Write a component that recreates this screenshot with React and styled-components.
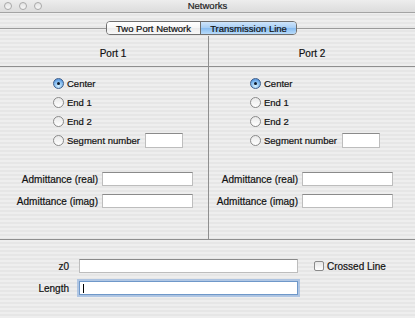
import React from 'react';
import styled, { createGlobalStyle } from 'styled-components';

const Global = createGlobalStyle`
    html, body {
        margin: 0;
        padding: 0;
    }
    body {
        font-family: "Liberation Sans", Arial, sans-serif;
        font-size: 10px;
        color: #111;
        -webkit-text-stroke: 0.2px #111;
    }
`

const stripes = 'repeating-linear-gradient(to bottom, #eeeeee 0px, #eeeeee 2px, #e6e6e6 2px, #e6e6e6 4px)';

const Window = styled.div`
    width: 415px;
    height: 318px;
    background: ${stripes};
    display: flex;
    flex-direction: column;
    overflow: hidden;
`

const TitleBar = styled.div`
    height: 12px;
    display: grid;
    grid-template-columns: 1fr auto 1fr;
    align-items: center;
    background: linear-gradient(#ededed, #dcdcdc);
    border-bottom: 1px solid #a3a3a3;
`

const Lights = styled.div`
    display: flex;
    gap: 7px;
    padding-left: 4px;
`

const Light = styled.span`
    width: 8px;
    height: 8px;
    border-radius: 50%;
    box-sizing: border-box;
    border: 1px solid #a9a9a9;
    background: linear-gradient(#e4e4e4, #f7f7f7);
`

const Title = styled.div`
    font-size: 9.5px;
    color: #2a2a2a;
    line-height: 12px;
`

const TabStrip = styled.div`
    display: flex;
    align-items: center;
    padding-top: 8px;
    padding-bottom: 1px;
    height: 14px;
`

const Rule = styled.div`
    flex: ${p => p.$w ? 'none' : '1'};
    width: ${p => p.$w}px;
    height: 1px;
    background: #9a9a9a;
`

const Segmented = styled.div`
    display: flex;
    height: 14px;
    border: 1px solid #6f6f6f;
    border-radius: 4px;
    overflow: hidden;
    box-sizing: border-box;
`

const Segment = styled.div`
    width: ${p => p.$w}px;
    display: flex;
    align-items: center;
    justify-content: center;
    font-size: 9.5px;
    color: #111;
    background: ${p => p.$on
        ? 'linear-gradient(#cfe5fb 0%, #a6cdf4 50%, #86bbf0 51%, #b9dcfb 100%)'
        : 'linear-gradient(#ffffff 0%, #f6f6f6 50%, #ececec 51%, #f8f8f8 100%)'};
    border-left: ${p => p.$on ? '1px solid #6f6f6f' : 'none'};
`

const Panels = styled.div`
    display: flex;
    height: 203px;
    border-bottom: 1px solid #8f8f8f;
`

const Column = styled.div`
    width: ${p => p.$w}px;
    flex: ${p => p.$w ? 'none' : '1'};
    border-right: ${p => p.$divider ? '1px solid #8f8f8f' : 'none'};
    display: flex;
    flex-direction: column;
`

const ColumnHead = styled.div`
    height: 18px;
    padding-top: 12px;
    padding-left: ${p => p.$shift}px;
    text-align: center;
    line-height: 12px;
    border-bottom: 1px solid #8f8f8f;
`

const RadioGroup = styled.div`
    display: flex;
    flex-direction: column;
    padding-top: 7px;
    padding-left: ${p => p.$shift}px;
    font-size: 9.5px;
`

const RadioRow = styled.div`
    height: 19px;
    display: flex;
    align-items: center;
    gap: 3px;
`

const RadioDot = styled.span`
    width: 11px;
    height: 11px;
    border-radius: 50%;
    box-sizing: border-box;
    border: 1px solid ${p => p.$on ? '#3f5f8c' : '#8a8a8a'};
    background: ${p => p.$on
        ? 'radial-gradient(circle at 50% 75%, #d8f2ff 0%, #7fb8ee 55%, #3f7fd0 100%)'
        : 'linear-gradient(#e9e9e9, #ffffff)'};
    display: flex;
    align-items: center;
    justify-content: center;

    &::after {
        content: '';
        width: 3px;
        height: 3px;
        border-radius: 50%;
        background: ${p => p.$on ? '#0d1a2c' : 'transparent'};
    }
`

const SmallBox = styled.div`
    width: 38px;
    height: 15px;
    margin-left: 2px;
    box-sizing: border-box;
    background: #fff;
    border: 1px solid #bdbdbd;
    border-top-color: #8a8a8a;
`

const FieldGrid = styled.div`
    display: grid;
    grid-template-columns: 89px 91px;
    column-gap: 4px;
    row-gap: 8px;
    align-items: center;
    margin-top: 22px;
    padding-left: ${p => p.$shift}px;
`

const Label = styled.div`
    text-align: right;
    white-space: nowrap;
`

const Field = styled.div`
    height: 14px;
    box-sizing: border-box;
    background: #fff;
    border: 1px solid #bdbdbd;
    border-top-color: #8a8a8a;
    display: flex;
    align-items: center;
    ${p => p.$focus && `
        border-color: #6f98c9;
        box-shadow: 0 0 0 2px rgba(128, 168, 220, 0.55);
    `}
`

const Caret = styled.span`
    width: 1px;
    height: 9px;
    margin-left: 3px;
    background: #000;
`

const Footer = styled.div`
    display: grid;
    grid-template-columns: 49px 219px auto;
    column-gap: 10px;
    row-gap: 8px;
    align-items: center;
    padding-top: 19px;
    padding-left: 20px;
`

const CheckWrap = styled.div`
    display: flex;
    align-items: center;
    gap: 3px;
    margin-left: 6px;
`

const CheckBox = styled.span`
    width: 10px;
    height: 10px;
    box-sizing: border-box;
    border: 1px solid #8a8a8a;
    border-radius: 2px;
    background: linear-gradient(#e6e6e6, #ffffff);
`

const Port = ({ name, headShift, radioShift, fieldShift, width, divider }) => (
    <Column $w={width} $divider={divider}>
        <ColumnHead $shift={headShift}>{name}</ColumnHead>
        <RadioGroup $shift={radioShift}>
            <RadioRow><RadioDot $on /> Center</RadioRow>
            <RadioRow><RadioDot /> End 1</RadioRow>
            <RadioRow><RadioDot /> End 2</RadioRow>
            <RadioRow><RadioDot /> Segment number <SmallBox /></RadioRow>
        </RadioGroup>
        <FieldGrid $shift={fieldShift}>
            <Label>Admittance (real)</Label>
            <Field />
            <Label>Admittance (imag)</Label>
            <Field />
        </FieldGrid>
    </Column>
)

export default function App() {
    return (
        <Window>
            <Global />
            <TitleBar>
                <Lights>
                    <Light />
                    <Light />
                    <Light />
                </Lights>
                <Title>Networks</Title>
                <div />
            </TitleBar>

            <TabStrip>
                <Rule $w={106} />
                <Segmented>
                    <Segment $w={93}>Two Port Network</Segment>
                    <Segment $w={95} $on>Transmission Line</Segment>
                </Segmented>
                <Rule />
            </TabStrip>

            <Panels>
                <Port name="Port 1" width={208} divider headShift={18} radioShift={53} fieldShift={9} />
                <Port name="Port 2" headShift={0} radioShift={41} fieldShift={0} />
            </Panels>

            <Footer>
                <Label>z0</Label>
                <Field />
                <CheckWrap><CheckBox /> Crossed Line</CheckWrap>
                <Label>Length</Label>
                <Field $focus><Caret /></Field>
                <div />
            </Footer>
        </Window>
    )
}
